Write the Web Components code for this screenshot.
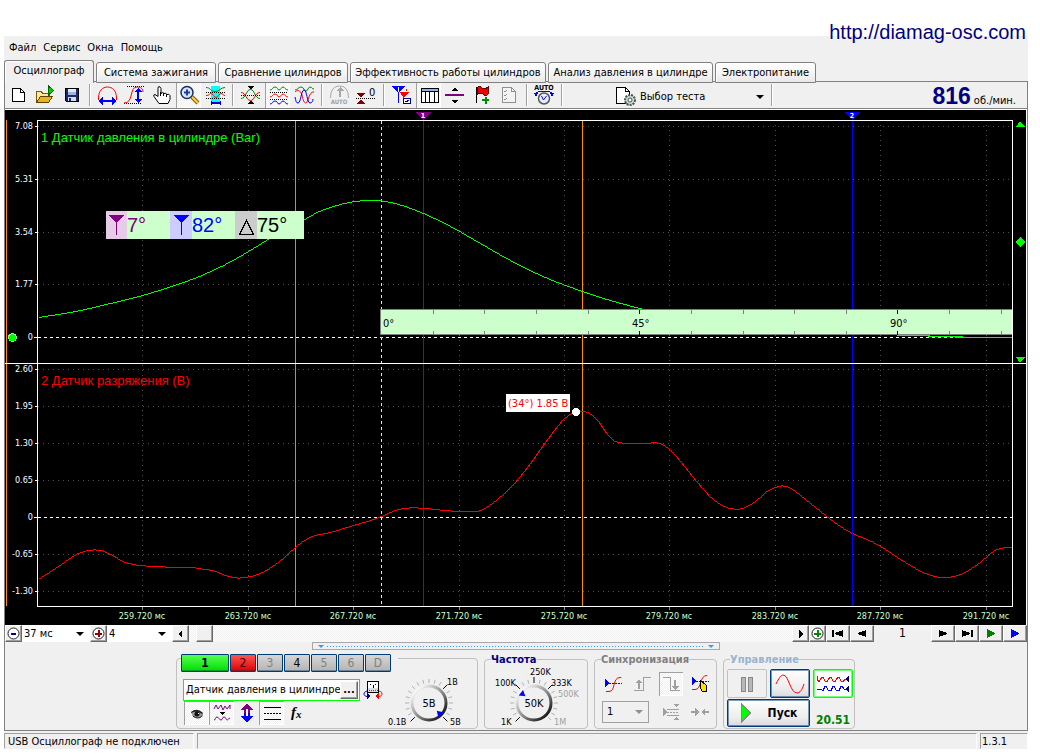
<!DOCTYPE html>
<html lang="ru">
<head>
<meta charset="utf-8">
<title>Осциллограф</title>
<style>
html { background: #fff; }
body { margin: 0; font: 11px/14px "DejaVu Sans Condensed", "DejaVu Sans", sans-serif; color: #000; }
</style>
</head>
<body>
<osc-app></osc-app>
<script>
const SVG = (w, h, body, vb) => `<svg width="${w}" height="${h}" viewBox="${vb || `0 0 ${w} ${h}`}" fill="none" shape-rendering="crispEdges" aria-hidden="true">${body}</svg>`;

/* Toolbar glyphs are 27x24, the size of a toolbar cell. */
const tool = (b) => SVG(27, 24, b);
const soft = (c, d) => `<path shape-rendering="auto" stroke="${c}" d="${d}"/>`;
const wave = (y, c) => soft(c, `M5 ${y + 3}c3 0 2-3 5-3s2 3 4 3 2-3 4-3 2 3 5 3`);
const ICONS = {
  new: tool('<path fill="#fff" stroke="#000" d="M7.500 5.500h8l4 4v9h-12z"/><path stroke="#000" d="M15.500 5.500v4h4"/>'),
  open: tool('<path fill="#ffe9a0" stroke="#7a5c00" d="M4.500 19.500v-11h5l1 2h7v4"/><path fill="#e6b422" stroke="#5c4400" d="M4.500 19.500l4-6h12l-4 6z"/><path fill="#0c0" stroke="#060" d="M16.500 3v9l5-4.500z"/>'),
  save: tool('<path fill="#1a2a6c" stroke="#000" d="M6.500 5.500h13v13h-12l-1-1z"/><path fill="#dfe9f7" d="M9 6h8v6h-8z"/><path fill="#9fb6d8" d="M9 9h8v3h-8z"/><path fill="#ddd" d="M9 14h8v4h-8z"/><path fill="#1a2a6c" d="M10 15h2v3h-2z"/>'),
  width: tool(soft('#f00', 'M4.500 17v-2c0-7 4-11 9-11s9 4 9 11v2') + '<path stroke="#00f" stroke-width="2" d="M6 18h15"/><path fill="#00f" d="M4 18l5-4v8zM23 18l-5-4v8z"/>'),
  height: tool('<path stroke="#000" stroke-dasharray="1 1" d="M6 3.500h17M3 20.500h18"/>' + soft('#f00', 'M3 20c10 0 5-16 13-16 4 0 6 2 6 5') + '<path stroke="#00f" stroke-width="2" d="M17 7v10"/><path fill="#00f" d="M17 5l-4 4h8zM17 20l-4-4h8z"/>'),
  hand: tool('<path fill="#fff" shape-rendering="auto" stroke="#000" d="M11 20.500l-5-7q-1-2 1-2l3 2v-8q0-2 1-2t2 2v5q2-2 3 0 2-1 3 1 2-1 3 1v4l-2 4z"/><path stroke="#000" d="M12.500 9v4M15.500 10v3M18.500 11v3"/>'),
  zoom: `<svg width="27" height="24" viewBox="0 0 27 24" fill="none" aria-hidden="true"><path stroke="#8a5a00" stroke-width="4" d="M16 14l6 6"/><path stroke="#ffd34d" stroke-width="2" d="M16 14l6 6"/><circle cx="11" cy="9.500" r="6" fill="#d6e6ff" stroke="#1c2f5c" stroke-width="1.500"/><path stroke="#1b3f9c" stroke-width="2" d="M8 9.500h6M11 6.500v6"/></svg>`,
  window: tool('<path fill="#0ff" d="M9 3h9v18h-9z"/><path stroke="#000" stroke-dasharray="1 1" d="M4 9.500h19M4 15.500h19"/>' + soft('#080', 'M4 4.500c5 0 4 4 9 4s5-4 10-4') + soft('#f00', 'M4 12.500c4 0 3-2 5-2s3 4 5 4 3-4 5-4 2 2 4 2') + '<path stroke="#00c" stroke-width="2" d="M10 20h8"/><path stroke="#00c" d="M9.500 18v4M18.500 18v4"/>'),
  center: tool('<path fill="#000" d="M10 3h7l-3 3h-1zM13 18h1l3 3h-7z"/>' + soft('#080', 'M4 15.500c5 0 5-9 9.500-9s4 9 9.500 9') + soft('#f00', 'M4 9.500c5 0 5 8 9.500 8s4-8 9.500-8') + '<path stroke="#000" stroke-dasharray="1 1" d="M4 12.500h19"/>'),
  split: tool(wave(4, '#080') + wave(11, '#f00') + wave(18, '#00f') + '<path stroke="#000" stroke-dasharray="1 1" d="M5 9.500h18M5 16.500h18"/>'),
  overlay: tool(soft('#080', 'M4 7c3 0 3-3 6-3s3 4 5 4 2-4 4-4 2 2 4 2') + soft('#f00', 'M4 9c2-2 5-3 7 3 1 5 2 8 4 8s3-12 8-11') + soft('#00f', 'M4 14c1 4 1 6 3 6 3 0 3-13 6-13s3 13 6 13c2 0 3-2 3-4')),
  auto: tool(soft('#a8a8a8', 'M4.500 15q0-12 9-12t9 12') + '<path stroke="#a8a8a8" stroke-width="2" d="M14 6v8"/><path fill="#a8a8a8" d="M14 4l4 4h-8z"/><text x="13" y="21" text-anchor="middle" font-size="6" font-weight="bold" fill="#a0a0a0">AUTO</text>'),
  zero: tool('<path fill="#800000" d="M4 10h8l-4 5zM8 16l4 5h-8z"/><path stroke="#000" stroke-dasharray="1 1" d="M3 15.500h19"/><text x="16" y="13" font-size="11" fill="#000">0</text>'),
  cursors: tool('<path fill="#00f" d="M4 3h13l-6 7h-1z"/><path stroke="#00f" d="M10.500 8v12"/><path fill="#f00" d="M12 9h9l-5 5h-1z"/><path stroke="#f00" d="M15.500 12v4M18 6l1 2"/><path fill="#fff" stroke="#008" d="M15.500 15.500h7v5h-7z"/><path stroke="#008" d="M17 18l1 1 3-2"/><path stroke="#fff" d="M9.500 5.500l1-1v4"/>'),
  table: tool('<path fill="#fff" stroke="#000" d="M5.500 5.500h17v14h-17z"/><path fill="#8fb4e8" stroke="#000" d="M5.500 5.500h17v3h-17z"/><path stroke="#000" d="M9.500 9v10M13.500 9v10M18.500 9v10"/>'),
  divide: tool('<path fill="#800080" d="M3 11h19v2h-19z"/><path fill="#000" d="M12 5h2l2 3h-6zM10 17h6l-2 3h-2z"/>'),
  flag: tool('<path stroke="#000" d="M7.500 4v16"/><path fill="#e00" stroke="#600" d="M8 5q2-3 5 0 3 2 6-1v7q-3 3-5 0-3-2-6 1z"/><path stroke="#080" stroke-width="2" d="M13 17h7M17 14v7"/>'),
  list: tool('<path fill="#f4f4f4" stroke="#909090" d="M6.500 4.500h9l4 4v11h-13z"/><path stroke="#909090" d="M15.500 4.500v4h4M8 8l1 1 2-2M8 12l1 1 2-2M8 16l1 1 2-2"/>'),
  timer: tool('<text x="13" y="7" text-anchor="middle" font-size="7" font-weight="bold" fill="#000">AUTO</text><path stroke="#00f" d="M5 12v-2q3-2 8-2t8 2v2"/><path fill="#00f" d="M3 10h4l-2 4zM19 10h4l-2 4z"/><circle shape-rendering="auto" cx="13" cy="15.500" r="5.500" fill="#e8eefc" stroke="#555" stroke-width="1.500"/>' + soft('#00f', 'M10.500 13l2 4 3-4')),
  test: SVG(20, 20, '<path fill="#fff" stroke="#000" d="M.5 .5h9l4 4v12h-13z"/><path stroke="#000" d="M9.500 .5v4h4"/><g shape-rendering="auto"><circle cx="14" cy="13" r="5" fill="#cfd8d0" stroke="#455" stroke-width="2" stroke-dasharray="2 1"/><circle cx="14" cy="13" r="2" fill="#fff" stroke="#455"/></g>'),
  minus: SVG(15, 15, '<circle cx="7.500" cy="7.500" r="5.500" fill="#fff" stroke="#222" shape-rendering="auto"/><path fill="#000080" d="M5 7h5v2h-5z"/>'),
  plus: SVG(15, 15, '<circle cx="7.500" cy="7.500" r="5.500" fill="#fff" stroke="#222" shape-rendering="auto"/><path fill="#900000" d="M4 7h7v2h-7zM7 4h2v7h-2z"/>'),
  plusg: SVG(15, 15, '<circle cx="7.500" cy="7.500" r="5.500" fill="#fff" stroke="#222" shape-rendering="auto"/><path fill="#080" d="M4 7h7v2h-7zM7 4h2v7h-2z"/>'),
  left: SVG(9, 9, '<path fill="#000" d="M6 1v8l-4-4z"/>'),
  right: SVG(9, 9, '<path fill="#000" d="M3 1v8l4-4z"/>'),
  first: SVG(12, 9, '<path fill="#000" d="M0 1h2v7h-2zM11 1v7l-8-3v-1z"/>'),
  prev: SVG(12, 9, '<path fill="#000" d="M10 1v7l-8-3v-1z"/>'),
  next: SVG(12, 9, '<path fill="#000" d="M2 1v7l8-3v-1z"/>'),
  last: SVG(12, 9, '<path fill="#000" d="M1 1v7l8-3v-1zM10 1h2v7h-2z"/>'),
  playg: SVG(12, 9, '<path fill="#008000" d="M2 0v9l8-4v-1z"/>'),
  playb: SVG(12, 9, '<path fill="#00f" d="M2 0v9l8-4v-1z"/>'),
  eye: SVG(20, 20, '<g shape-rendering="auto"><path fill="#999" d="M4 9q6-4 12 1v3q-5 4-10 1z"/><path fill="#222" d="M4 9q6-5 12 1l-1 1q-5-4-11-1z"/><circle cx="10" cy="11" r="2.500" fill="#111"/><path stroke="#222" d="M6 13q5 4 9 0"/></g><path fill="#fff" d="M11 10h1v1h-1z"/>'),
  smooth: SVG(22, 20, '<path stroke="#800080" d="M3 6l2-4 2 4 3-4 2 5 2-4 2 3 3-4v4" shape-rendering="auto"/><path fill="#000" d="M8 9h6l-3 3z"/>' + soft('#800080', 'M3 17c2 0 1-3 3-3s2 3 4 3 1-3 3-3 2 3 3 3 1-1 3-2')),
  shift: SVG(20, 20, '<path fill="#800080" d="M10 1l7 6h-4v3h-6v-3h-4z"/><path fill="#00f" d="M7 10h6v3h4l-7 6-7-6h4z"/><path fill="#fff" d="M9 6h2v7h-2z"/>'),
  lines: SVG(20, 20, '<path stroke="#000" d="M2 4.500h17M2 16.500h17"/><path stroke="#000" stroke-dasharray="2 1" d="M2 10.500h17"/>'),
  fx: SVG(20, 20, '<text x="4" y="14" font-family="Liberation Serif, serif" font-style="italic" font-weight="bold" font-size="15" fill="#000">f</text><text x="9" y="15" font-family="Liberation Serif, serif" font-style="italic" font-weight="bold" font-size="11" fill="#000">x</text>'),
  probe: SVG(20, 22, '<path fill="#ddd" stroke="#000" d="M4.500 2.500h11v11h-11z"/><path fill="#fff" d="M5 3h10v6h-10z"/><path stroke="#000" d="M7 5h1M12 5h1M10 6v3"/><path stroke="#080" stroke-dasharray="1 1" d="M6 11.500h9"/>' + soft('#008', 'M4 12c-4 1-4 5 0 5.500') + '<path fill="#008" d="M8 17l-4-3v6z"/>' + soft('#f00', 'M16 12c4 1 4 5 0 5.500') + '<path fill="#f00" d="M12 17l4-3v6z"/>'),
  trig: SVG(20, 20, '<path fill="#00f" d="M2 5l4 4-4 4z"/><path stroke="#00f" stroke-dasharray="2 1" d="M6 9.500h13"/>' + soft('#f00', 'M3 17.500h3c7 0 3-14 11-14h1')),
  rise: SVG(20, 20, '<path stroke="#a0a0a0" d="M2 16.500h9.500v-13h7"/><path fill="#a0a0a0" d="M7 5l3 4h-2v6h-2v-6h-2z"/>'),
  fall: SVG(20, 20, '<path stroke="#a0a0a0" d="M2 3.500h7.500v13h9"/><path fill="#a0a0a0" d="M14 16l4-4h-3v-6h-2v6h-3z"/>'),
  pick: SVG(20, 22, '<path fill="#00f" d="M2 4l4 4-4 4z"/><path stroke="#00f" stroke-dasharray="2 1" d="M6 8.500h13"/>' + soft('#f00', 'M2 16.500h3c7 0 4-14 12-14') + '<path fill="#ffe000" stroke="#000" d="M10.500 7.500l6 5v6h-4l-2-3z"/>'),
  level: SVG(20, 20, '<path fill="#a0a0a0" d="M2 6l4 4-4 4zM12 2h6l-3 3zM15 15l3 3h-6z"/><path stroke="#a0a0a0" stroke-dasharray="2 1" d="M6 10.500h12"/><path stroke="#a0a0a0" d="M6 7.500h12M6 13.500h12"/>'),
  join: SVG(20, 20, '<path fill="#a0a0a0" d="M1 9h4v-3l4 4-4 4v-3h-4zM19 9h-4v-3l-4 4 4 4v-3h4z"/>'),
  pause: SVG(20, 20, '<path fill="#b8b8b8" stroke="#888" d="M4.500 3.500h4v14h-4zM11.500 3.500h4v14h-4z"/>'),
  sine: SVG(30, 22, soft('#f00', 'M1 11c3-6 5-9 7-9 6 0 7 18 14 18 3 0 5-3 7-9')),
  double: SVG(34, 22, '<path stroke="#f00" d="M1 3v3l2 3 3-5h1l2 4 2 1 3-5h1l2 4 2 1 3-5h1l2 4 2 1 2-3h2"/><path stroke="#00f" d="M1 16h4l2 2 2-5h1l2 4 3 1 2-5h1l2 4 3 1 2-5h1l2 3h4"/><path fill="#008" d="M33 3v6l-4-3zM33 13v6l-4-3z"/>'),
  run: SVG(12, 20, '<path fill="#0f0" stroke="#888" d="M1.500 1l9 9-9 9z"/>')
};

function define(name, html, setup) {
  const t = document.createElement('template');
  t.innerHTML = html;
  customElements.define(name, class extends HTMLElement {
    connectedCallback() {
      if (this.shadowRoot) return;
      this.attachShadow({ mode: 'open' }).append(t.content.cloneNode(true));
      if (setup) setup(this, this.shadowRoot);
    }
  });
}

define('osc-icon', '<style>:host{display:block;line-height:0}svg{display:block}</style>', (el, root) => {
  root.innerHTML += ICONS[el.getAttribute('name')];
});

/* Flat toolbar button; "pressed" gives it the sunken look. */
define('tool-button', `<style>
:host{display:block}
button{all:unset;box-sizing:border-box;display:grid;place-items:center;width:100%;height:100%;overflow:hidden}
:host([pressed]) button{background:repeating-conic-gradient(#fff 0 25%,#f0f0f0 0 50%) 0 0/2px 2px;box-shadow:inset 1px 1px #a0a0a0,inset -1px -1px #fff}
</style><button type="button"><slot></slot></button>`, (el, root) => {
  const b = root.querySelector('button');
  b.setAttribute('aria-label', el.getAttribute('label') || '');
  if (el.hasAttribute('pressed')) b.setAttribute('aria-pressed', 'true');
});

/* Raised 3D button of the navigation strip. */
define('bevel-button', `<style>
:host{display:block}
button{all:unset;box-sizing:border-box;display:grid;place-items:center;width:100%;height:100%;background:#f0f0f0;border:1px solid;border-color:#fff #696969 #696969 #fff;box-shadow:inset -1px -1px #a0a0a0;font-weight:bold}
</style><button type="button"><slot></slot></button>`, (el, root) => {
  root.querySelector('button').setAttribute('aria-label', el.getAttribute('label') || '');
});

/* XP style button used in the control groups and for the channels. */
define('xp-button', `<style>
:host{display:block}
button{all:unset;box-sizing:border-box;display:flex;align-items:center;justify-content:center;gap:16px;width:100%;height:100%;border:1px solid #003c74;border-radius:2px;box-shadow:inset 0 0 0 1px #003c7480;background:linear-gradient(#fff,#ececec 70%,#d8d8e4);font-size:12px;font-weight:bold}
:host([tone=off]) button{border-color:#c0c0c0;box-shadow:none;background:#f0f0f0}
:host([tone=on]) button{border-color:#0f0;box-shadow:inset 0 0 0 1px #0f08;background:#fff}
:host([channel]) button{box-shadow:inset 0 -1px #003c7466;background:linear-gradient(#d6d6d6,#b4b4b4);font-weight:normal;color:#808080;border-radius:1px}
:host([channel=live]) button{color:#000}
:host([channel=green]) button{background:linear-gradient(#5f5,#0d0);color:#000;font-weight:bold}
:host([channel=red]) button{background:linear-gradient(#f55,#e00000);color:#400}
</style><button type="button"><slot></slot></button>`, (el, root) => {
  if (el.hasAttribute('label')) root.querySelector('button').setAttribute('aria-label', el.getAttribute('label'));
});

define('osc-select', `<style>
:host{display:block;position:relative;background:var(--bg,#fff)}
select{appearance:none;box-sizing:border-box;display:block;width:100%;height:100%;margin:0;padding:0 12px 0 var(--pad,2px);border:0;background:none;font:inherit;color:#000;border-radius:0}
:host([boxed]) select{border:1px solid #a0a0a0}
:host::after{content:"";position:absolute;right:var(--arrow,6px);top:calc(50% - 2px);border:4px solid transparent;border-top-color:var(--mark,#000);border-bottom:0;pointer-events:none}
</style><select></select>`, (el, root) => {
  const s = root.querySelector('select');
  s.setAttribute('aria-label', el.getAttribute('label'));
  s.add(new Option(el.getAttribute('value')));
});

define('osc-menu', `<style>
:host{display:flex;gap:7px;padding:5px}
button{all:unset;font:inherit}
</style><button>Файл</button><button>Сервис</button><button>Окна</button><button>Помощь</button>`);

define('osc-tabs', `<style>
:host{display:grid;grid-template-columns:90px 120px 130px 196px 165px 101px;align-items:end;column-gap:2px;height:22px;margin-bottom:-1px;position:relative}
button{all:unset;box-sizing:border-box;height:21px;line-height:19px;text-align:center;white-space:nowrap;border:1px solid #808080;border-radius:3px 3px 0 0;background:linear-gradient(#fff,#f4f4f4 60%,#e8e8e8);box-shadow:inset 1px 1px #fff}
button[aria-selected=true]{height:23px;border-bottom:0;padding-bottom:3px;background:#f0f0f0}
</style>
<button role="tab" aria-selected="true">Осциллограф</button><button role="tab">Система зажигания</button><button role="tab">Сравнение цилиндров</button><button role="tab">Эффективность работы цилиндров</button><button role="tab">Анализ давления в цилиндре</button><button role="tab">Электропитание</button>`);

define('osc-toolbar', `<style>
:host{display:flex;height:26px;border-bottom:1px solid #808080;box-shadow:0 1px #fff;margin-bottom:1px}
tool-button{width:27px;flex:none}
tool-button[pressed]{width:25px;padding:0 1px}
i{width:8px;flex:none;display:block;background:linear-gradient(#a0a0a0,#a0a0a0) 3px 2px/1px 22px no-repeat,linear-gradient(#fff,#fff) 4px 2px/1px 22px no-repeat}
.test{display:flex;align-items:center;gap:4px;width:202px;padding:3px 0 0 50px;box-sizing:border-box}
.test osc-select{flex:1;height:20px;--bg:transparent;--pad:0px;--arrow:4px}
.rpm{margin-left:auto;display:flex;align-items:baseline;gap:3px;padding-right:11px}
b{font:bold 23px/28px "Liberation Sans",Arial,sans-serif;color:#000080}
</style>
<tool-button label="Новый"><osc-icon name="new"></osc-icon></tool-button>
<tool-button label="Открыть"><osc-icon name="open"></osc-icon></tool-button>
<tool-button label="Сохранить"><osc-icon name="save"></osc-icon></tool-button><i></i>
<tool-button label="Ширина"><osc-icon name="width"></osc-icon></tool-button>
<tool-button label="Высота"><osc-icon name="height"></osc-icon></tool-button>
<tool-button label="Рука"><osc-icon name="hand"></osc-icon></tool-button>
<tool-button label="Лупа" pressed><osc-icon name="zoom"></osc-icon></tool-button>
<tool-button label="Окно"><osc-icon name="window"></osc-icon></tool-button><i></i>
<tool-button label="Центр"><osc-icon name="center"></osc-icon></tool-button>
<tool-button label="Раздельно" pressed><osc-icon name="split"></osc-icon></tool-button>
<tool-button label="Вместе"><osc-icon name="overlay"></osc-icon></tool-button><i></i>
<tool-button label="Авто"><osc-icon name="auto"></osc-icon></tool-button>
<tool-button label="Ноль"><osc-icon name="zero"></osc-icon></tool-button><i></i>
<tool-button label="Линейки"><osc-icon name="cursors"></osc-icon></tool-button>
<tool-button label="Таблица" pressed><osc-icon name="table"></osc-icon></tool-button>
<tool-button label="Разделитель"><osc-icon name="divide"></osc-icon></tool-button>
<tool-button label="Флаг"><osc-icon name="flag"></osc-icon></tool-button>
<tool-button label="Список"><osc-icon name="list"></osc-icon></tool-button><i></i>
<tool-button label="Таймер"><osc-icon name="timer"></osc-icon></tool-button><i></i>
<div class="test"><osc-icon name="test"></osc-icon><osc-select label="Выбор теста" value="Выбор теста"></osc-select></div><i></i>
<div class="rpm"><b>816</b><span>об./мин.</span></div>`);

/* One whole-pixel sample per column, on a smooth (cubic Hermite) line through the points. */
function trace(pts) {
  const slope = (i) => {
    const a = pts[Math.max(i - 1, 0)], b = pts[Math.min(i + 1, pts.length - 1)];
    return (b[1] - a[1]) / (b[0] - a[0]);
  };
  const out = [];
  for (let i = 0; i < pts.length - 1; i++) {
    const [x0, y0] = pts[i], [x1, y1] = pts[i + 1], h = x1 - x0, m0 = slope(i) * h, m1 = slope(i + 1) * h;
    for (let x = x0; x < x1; x++) {
      const t = (x - x0) / h, u = t * t, v = u * t;
      const y = (2 * v - 3 * u + 1) * y0 + (v - 2 * u + t) * m0 + (3 * u - 2 * v) * y1 + (v - u) * m1;
      out.push(`${x + .5} ${Math.round(y) + .5}`);
    }
  }
  return 'M' + out.join('L');
}
const PRESSURE = [[38,317],[75,311],[110,303],[142,295],[180,283],[200,275.5],[225,264],[248,251],[266,240],[285,229],[305,218.5],[320,210.5],[340,204],[355,201],[371,200],[385,201],[400,204.500],[423,213],[450,226],[480,243],[510,260],[545,277],[582,291],[610,300],[643,309]];
const VACUUM = [[38,579],[58,566],[75,554.5],[88,550],[100,550],[110,554],[125,562],[140,565],[165,566.5],[190,567],[205,569],[215,571],[225,575],[237,577.5],[250,576],[262,572],[275,564],[285,556],[296,546],[305,539.500],[315,535],[330,532],[353,525],[370,520],[381,516],[395,510],[408,507.5],[425,508],[440,509.500],[460,511],[480,510],[495,500.500],[513,484],[530,463],[545,442],[560,422.5],[568,415],[576,411.5],[587,412],[597,420],[607,434],[615,441],[630,443],[645,443],[657,442.500],[668,448],[680,461],[697,482],[710,496.5],[720,504],[730,508],[742,508],[755,501],[765,492],[775,487],[783,485.5],[792,489],[805,499],[825,515],[840,526],[852,533],[870,540.5],[885,549],[905,562],[925,573],[942,577],[960,574],[980,562],[990,553],[1000,548],[1012,547]];

define('osc-plot', `<style>
:host{display:block;background:#000;border-right:1px solid #fff}
svg{display:block;width:100%}
text{font:9px "DejaVu Sans Condensed","DejaVu Sans",sans-serif}
.axis{fill:#fff;text-anchor:end}
.time{fill:#cfc;text-anchor:middle}
.name{font:13px "Liberation Sans",Arial,sans-serif}
.angle{font-size:11px;fill:#000}
.peak{font-size:11px;fill:#f00}
.big{font:20px "Liberation Sans",Arial,sans-serif}
.mark{font-size:7px;font-weight:bold;fill:#fff;text-anchor:middle}
</style>`, (el, root) => {
  const line = (x1, y1, x2, y2, c, dash) => `<path stroke="${c}" ${dash ? `stroke-dasharray="${dash}"` : ''} d="M${x1} ${y1}L${x2} ${y2}"/>`;
  let g = '';
  const rows = [[126,'7.08'],[179,'5.31'],[232,'3.54'],[284,'1.77'],[337,'0'],[369,'2.60'],[406,'1.95'],[443,'1.30'],[480,'0.65'],[517,'0'],[554,'-0.65'],[591,'-1.30']];
  [142,248,353,459,564,669,775,880,986].forEach((x, i) => {
    g += line(x + .5, 125, x + .5, 604, '#505050', '1 4') + line(x + .5, 607, x + .5, 610, '#888');
    g += `<text class="time" x="${x}" y="619">${259 + 4 * i}.720 мс</text>`;
  });
  rows.forEach(([y, t]) => {
    g += t === '0' ? line(38, y + .5, 1012, y + .5, '#fff', '3 3') : line(38, y + .5, 1012, y + .5, '#505050', '1 4');
    g += line(t === '0' ? 34 : 35, y + .5, 37, y + .5, '#fff') + `<text class="axis" x="33" y="${y + 3}">${t}</text>`;
  });
  g += line(6.5, 120, 6.5, 606, '#ff9000');
  g += line(295.5, 121, 295.5, 606, '#0f0');
  g += line(381.5, 121, 381.5, 606, '#ff0', '3 3');
  g += line(423.5, 118, 423.5, 606, '#800080');
  g += `<path stroke="#0f0" d="${trace(PRESSURE)}"/><path stroke="#0f0" d="M897 335.500h33M928 336.500h35M955 337.500h57"/>`;
  g += line(582.5, 121, 582.5, 606, '#ff9000');
  g += `<path stroke="#f00" d="${trace(VACUUM)}"/>`;
  g += line(852.5, 118, 852.5, 606, '#00f');
  g += `<path stroke="#fff" d="M37.500 120.500h975v486h-975zM5 363.500h1021"/>`;
  g += `<path fill="#800080" d="M415 112h16l-7 8h-1z"/><path fill="#00f" d="M844 112h16l-7 8h-1z"/><text class="mark" x="423" y="118">1</text><text class="mark" x="852" y="118">2</text>`;
  g += `<circle cx="12.500" cy="337.500" r="4" fill="#0f0" stroke="#8f8"/><path fill="#0f0" d="M1020 121l5 6h-9zM1020 237l5 5-5 5-5-5zM1016 357h9l-5 6z"/>`;
  g += `<text class="name" x="41" y="142" fill="#0f0">1 Датчик давления в цилиндре (Bar)</text><text class="name" x="41" y="385" fill="#f00">2 Датчик разряжения (В)</text>`;
  g += '<path fill="#cfc" d="M381 309h631v26h-631z"/><path stroke="#808080" d="M1012 309.500h-631.500v25h631.500"/>';
  [433,484,536,588,639,691,743,794,846,897,949,1001].forEach(x => {
    const c = x === 639 || x === 897 ? '#000' : '#808080';
    g += line(x + .5, 310, x + .5, 314, c) + line(x + .5, 331, x + .5, 335, c);
  });
  g += '<text class="angle" x="383" y="327">0°</text><text class="angle" x="632" y="327">45°</text><text class="angle" x="890" y="327">90°</text>';
  g += `<path fill="#cfc" d="M106 211h198v28h-198z"/><path fill="#e6cce6" d="M106 211h21v28h-21z"/><path fill="#ccf" d="M170 211h22v28h-22z"/><path fill="#ccc" d="M235 211h22v28h-22z"/>
    <path fill="#800080" d="M109 215h15l-7 8h-1z"/><path fill="#00f" d="M174 215h15l-7 8h-1z"/><path stroke="#800080" d="M116.500 222v13"/><path stroke="#00f" d="M181.500 222v13"/><path stroke="#000" d="M239.500 234.500h14l-7-14z"/>
    <text class="big" x="127" y="232" fill="#800080">7°</text><text class="big" x="192" y="232" fill="#00f">82°</text><text class="big" x="257" y="232" fill="#000">75°</text>`;
  g += '<path fill="#fff" d="M506 394h64v18h-64z"/><text class="peak" x="508" y="407">(34°) 1.85 В</text><circle cx="576" cy="412" r="4" fill="#fff"/>';
  root.innerHTML += `<svg viewBox="5 110 1021 515" fill="none" shape-rendering="crispEdges" role="img" aria-label="Осциллограмма">${g}</svg>`;
});

define('osc-nav', `<style>
:host{display:flex;height:17px}
bevel-button,osc-select{flex:none}
.s{width:17px}.m{width:24px}
.span{width:68px}.gain{width:65px}
.page{width:57px;text-align:center;line-height:17px;font-size:12px}
input{appearance:none;flex:1;min-width:0;margin:0;height:17px;background:repeating-conic-gradient(#fff 0 25%,#f0f0f0 0 50%) 0 0/2px 2px}
input::-webkit-slider-thumb{appearance:none;width:17px;height:17px;background:#f0f0f0;border:1px solid;border-color:#fff #696969 #696969 #fff;box-shadow:inset -1px -1px #a0a0a0}
</style>
<bevel-button class="s" label="Уменьшить"><osc-icon name="minus"></osc-icon></bevel-button>
<osc-select class="span" label="Развёртка" value="37 мс"></osc-select>
<bevel-button class="s" label="Увеличить"><osc-icon name="plus"></osc-icon></bevel-button>
<osc-select class="gain" label="Масштаб" value="4"></osc-select>
<bevel-button class="s" label="Влево"><osc-icon name="left"></osc-icon></bevel-button>
<input type="range" min="0" max="585" value="7" aria-label="Прокрутка">
<bevel-button class="s" label="Вправо"><osc-icon name="right"></osc-icon></bevel-button>
<bevel-button class="s" label="Добавить"><osc-icon name="plusg"></osc-icon></bevel-button>
<bevel-button class="m" label="Первая"><osc-icon name="first"></osc-icon></bevel-button>
<bevel-button class="m" label="Назад"><osc-icon name="prev"></osc-icon></bevel-button>
<output class="page">1</output>
<bevel-button class="m" label="Вперёд"><osc-icon name="next"></osc-icon></bevel-button>
<bevel-button class="m" label="Последняя"><osc-icon name="last"></osc-icon></bevel-button>
<bevel-button class="m" label="Воспроизвести"><osc-icon name="playg"></osc-icon></bevel-button>
<bevel-button class="m" label="Воспроизвести далее"><osc-icon name="playb"></osc-icon></bevel-button>`);

define('osc-splitter', `<style>
:host{box-sizing:border-box;display:flex;align-items:center;gap:3px;width:408px;max-width:100%;height:8px;margin:0 auto;padding:0 5px;border:1px solid #a8a8a8}
i{border:3px solid transparent;border-top-color:#3399ff;border-bottom:0}
span{flex:1;height:1px;background:repeating-linear-gradient(90deg,#39f 0 1px,transparent 1px 3px)}
</style><i></i><span></span><i></i>`);

/* Rotary knob: ticks run clockwise from lower left to lower right. */
define('osc-knob', `<style>:host{display:block}svg{display:block;overflow:visible}text{font:9px "DejaVu Sans Condensed","DejaVu Sans",sans-serif}.v{font-size:11px}</style>`, (el, root) => {
  const labels = JSON.parse(el.getAttribute('labels'));
  const w = +el.getAttribute('width'), cx = +el.getAttribute('cx'), cy = 31, at = +el.getAttribute('at');
  const p = (deg, r) => { const a = deg * Math.PI / 180; return `${cx + r * Math.sin(a)} ${cy - r * Math.cos(a)}`; };
  const live = el.getAttribute('live').split(',').map(Number);
  let g = '';
  for (let a = -135; a <= 135; a += 15) g += `<path stroke="${live.includes(a) ? '#000' : '#b0b0b0'}" d="M${p(a, 20)}L${p(a, live.includes(a) ? 26 : 24)}"/>`;
  g += `<defs><linearGradient id="k" x2="1" y2="1"><stop offset=".1" stop-color="#fff"/><stop offset=".6" stop-color="#777"/><stop offset=".9" stop-color="#111"/></linearGradient></defs>
    <circle cx="${cx}" cy="${cy}" r="17" fill="#f0f0f0" stroke="url(#k)" stroke-width="3"/><path fill="#00f" d="M${p(at - 12, 17)}L${p(at + 12, 17)}L${p(at, 11)}z"/>
    <text class="v" x="${cx}" y="${cy + 4}" text-anchor="middle" fill="#000">${el.getAttribute('value')}</text>`;
  for (const [t, x, y, off] of labels) g += `<text x="${x}" y="${y}" fill="${off ? '#a0a0a0' : '#000'}">${t}</text>`;
  root.innerHTML += `<svg width="${w}" height="56" viewBox="0 0 ${w} 56" fill="none" role="img">${g}</svg>`;
});

define('group-box', `<style>
:host{display:block;box-sizing:border-box}
fieldset{box-sizing:border-box;width:100%;height:76px;margin:0;padding:0 3px;border:1px solid #c0c0c0;border-radius:4px;min-width:0}
legend{margin-left:3px;padding:0;line-height:13px;font-weight:bold;color:var(--tone)}
</style><fieldset><legend></legend><slot></slot></fieldset>`, (el, root) => {
  root.querySelector('legend').textContent = el.getAttribute('title-text');
});

define('channel-panel', `<style>
:host{display:block;box-sizing:border-box;width:302px;height:71px;margin-top:5px;border:1px solid #c0c0c0;border-radius:4px;padding-left:4px}
nav{display:flex;gap:1px;width:217px;height:18px;margin-top:-5px;background:#f0f0f0}
xp-button{width:26px}
xp-button:first-child{width:48px}
.row{display:flex}
.left{width:205px}
.name{display:flex;align-items:center;gap:3px;margin:7px 0 0 2px}
label{box-sizing:border-box;display:flex;width:177px;height:22px;border:1px solid #0f0;background:#fff;padding:1px}
input{flex:1;min-width:0;border:0;padding:0 0 0 1px;background:none;font:inherit;outline:0}
label bevel-button{width:18px}
.tools{display:flex;margin-left:3px}
tool-button{width:25px;height:24px}
</style>
<nav aria-label="Каналы"><xp-button channel="green">1</xp-button><xp-button channel="red">2</xp-button><xp-button channel="off">3</xp-button><xp-button channel="live">4</xp-button><xp-button channel="off">5</xp-button><xp-button channel="off">6</xp-button><xp-button channel="off">D</xp-button></nav>
<div class="row"><div class="left">
<div class="name"><label><input value="Датчик давления в цилиндре" aria-label="Датчик"><bevel-button label="Выбрать">...</bevel-button></label><osc-icon name="probe"></osc-icon></div>
<div class="tools"><tool-button pressed label="Показать"><osc-icon name="eye"></osc-icon></tool-button><tool-button pressed label="Сгладить"><osc-icon name="smooth"></osc-icon></tool-button><tool-button label="Сдвиг"><osc-icon name="shift"></osc-icon></tool-button><tool-button pressed label="Линии"><osc-icon name="lines"></osc-icon></tool-button><tool-button label="Функция"><osc-icon name="fx"></osc-icon></tool-button></div>
</div>
<osc-knob width="90" cx="43" at="135" live="-135,45,135" value="5В" labels='[["0.1В",2,53],["1В",61,13],["5В",64,53]]'></osc-knob></div>`);

define('osc-controls', `<style>
:host{display:flex;justify-content:center;gap:6px;padding:3px 1px 1px 0}
.freq{width:104px;--tone:#000080}
.sync{width:123px;--tone:#808080}
.run{width:132px;--tone:#99b4d1}
.freq osc-knob{margin:6px 0 0 -3px}
.grid{display:grid;grid-template-columns:29px 29px 29px 29px;grid-template-rows:28px 28px;place-items:center;margin-top:4px}
.grid tool-button{width:24px;height:24px}
.grid osc-select{grid-column:1/3;justify-self:start;width:47px;height:22px;margin-left:4px;--bg:transparent;--mark:#909090;--pad:4px}
.keys{display:grid;grid-template-columns:40px 40px 40px;grid-template-rows:29px 28px;gap:1px 3px;margin-top:3px}
.go{grid-column:1/3}
output{align-self:end;text-align:center;font-size:12px;font-weight:bold;color:#008000}
</style>
<channel-panel></channel-panel>
<group-box class="freq" title-text="Частота"><osc-knob width="104" cx="49" at="-52" live="-135,-45,0,45" value="50K" labels='[["1K",16,53],["100K",10,14],["250K",45,3],["333K",66,14],["500K",73,25,1],["1M",69,53,1]]'></osc-knob></group-box>
<group-box class="sync" title-text="Синхронизация"><div class="grid">
<tool-button label="Уровень"><osc-icon name="trig"></osc-icon></tool-button><tool-button label="Фронт"><osc-icon name="rise"></osc-icon></tool-button><tool-button label="Спад" pressed><osc-icon name="fall"></osc-icon></tool-button><tool-button label="Указать"><osc-icon name="pick"></osc-icon></tool-button>
<osc-select boxed label="Канал" value="1"></osc-select><tool-button label="Диапазон"><osc-icon name="level"></osc-icon></tool-button><tool-button label="Свести"><osc-icon name="join"></osc-icon></tool-button></div></group-box>
<group-box class="run" title-text="Управление"><div class="keys">
<xp-button tone="off" label="Пауза"><osc-icon name="pause"></osc-icon></xp-button><xp-button label="Один кадр"><osc-icon name="sine"></osc-icon></xp-button><xp-button tone="on" label="Непрерывно"><osc-icon name="double"></osc-icon></xp-button>
<xp-button class="go"><osc-icon name="run"></osc-icon>Пуск</xp-button><output>20.51</output></div></group-box>`);

define('osc-status', `<style>
:host{display:flex;gap:3px;margin-top:2px;line-height:16px}
span{box-sizing:border-box;height:16px;padding-left:3px;border:1px solid;border-color:#a0a0a0 #fff #f0f0f0 #a0a0a0;line-height:15px}
.state{width:190px}
.info{flex:1}
.version{width:48px;padding-left:1px}
</style><span class="state">USB Осциллограф не подключен</span><span class="info"></span><span class="version">1.3.1</span>`);

define('osc-app', `<style>
:host{display:block;margin:36px 12px 0 4px;background:#f0f0f0;position:relative}
a{position:absolute;right:2px;top:-16px;font:20px/24px "Liberation Sans",Arial,sans-serif;color:#000080;text-decoration:none}
.panel{border:1px solid #808080}
</style>
<a href="http://diamag-osc.com">http://diamag-osc.com</a>
<osc-menu></osc-menu><osc-tabs></osc-tabs>
<div class="panel"><osc-toolbar></osc-toolbar><osc-plot></osc-plot><osc-nav></osc-nav><osc-splitter></osc-splitter><osc-controls></osc-controls></div>
<osc-status></osc-status>`);
</script>
</body>
</html>
